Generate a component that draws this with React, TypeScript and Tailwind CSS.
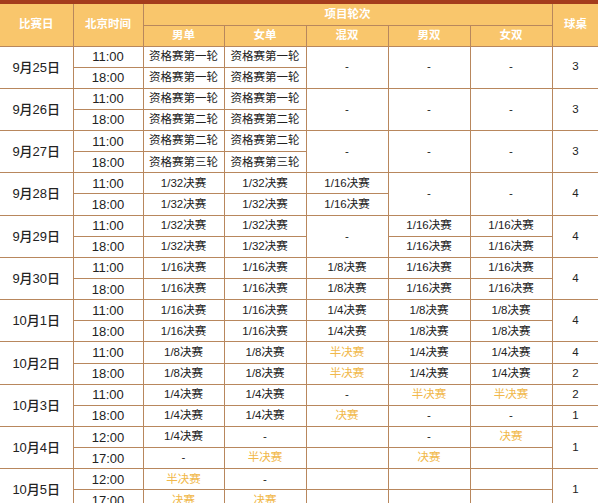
type Cell = { t: string; rs?: number; gold?: boolean; kind?: "date" | "time" };

const g = (t: string): Cell => ({ t, gold: true });
const c = (t: string, rs?: number): Cell => ({ t, rs });
const d = (t: string): Cell => ({ t, rs: 2, kind: "date" });
const tm = (t: string): Cell => ({ t, kind: "time" });

const Q1 = "资格赛第一轮";
const Q2 = "资格赛第二轮";
const Q3 = "资格赛第三轮";
const R32 = "1/32决赛";
const R16 = "1/16决赛";
const R8 = "1/8决赛";
const R4 = "1/4决赛";

const rows: Cell[][] = [
  [d("9月25日"), tm("11:00"), c(Q1), c(Q1), c("-", 2), c("-", 2), c("-", 2), c("3", 2)],
  [tm("18:00"), c(Q1), c(Q1)],
  [d("9月26日"), tm("11:00"), c(Q1), c(Q1), c("-", 2), c("-", 2), c("-", 2), c("3", 2)],
  [tm("18:00"), c(Q2), c(Q2)],
  [d("9月27日"), tm("11:00"), c(Q2), c(Q2), c("-", 2), c("-", 2), c("-", 2), c("3", 2)],
  [tm("18:00"), c(Q3), c(Q3)],
  [d("9月28日"), tm("11:00"), c(R32), c(R32), c(R16), c("-", 2), c("-", 2), c("4", 2)],
  [tm("18:00"), c(R32), c(R32), c(R16)],
  [d("9月29日"), tm("11:00"), c(R32), c(R32), c("-", 2), c(R16), c(R16), c("4", 2)],
  [tm("18:00"), c(R32), c(R32), c(R16), c(R16)],
  [d("9月30日"), tm("11:00"), c(R16), c(R16), c(R8), c(R16), c(R16), c("4", 2)],
  [tm("18:00"), c(R16), c(R16), c(R8), c(R16), c(R16)],
  [d("10月1日"), tm("11:00"), c(R16), c(R16), c(R4), c(R8), c(R8), c("4", 2)],
  [tm("18:00"), c(R16), c(R16), c(R4), c(R8), c(R8)],
  [d("10月2日"), tm("11:00"), c(R8), c(R8), g("半决赛"), c(R4), c(R4), c("4")],
  [tm("18:00"), c(R8), c(R8), g("半决赛"), c(R4), c(R4), c("2")],
  [d("10月3日"), tm("11:00"), c(R4), c(R4), c("-"), g("半决赛"), g("半决赛"), c("2")],
  [tm("18:00"), c(R4), c(R4), g("决赛"), c("-"), c("-"), c("1")],
  [d("10月4日"), tm("12:00"), c(R4), c("-"), c(""), c("-"), g("决赛"), c("1", 2)],
  [tm("17:00"), c("-"), g("半决赛"), c(""), g("决赛"), c("")],
  [d("10月5日"), tm("12:00"), g("半决赛"), c("-"), c(""), c(""), c(""), c("1", 2)],
  [tm("17:00"), g("决赛"), g("决赛"), c(""), c(""), c("")],
];

const line = "border border-[#b8875d]";

export default function App() {
  return (
    <div
      className="w-[598px] h-[503px] overflow-hidden bg-white"
      style={{ fontFamily: '"Liberation Sans", "Noto Sans CJK SC", sans-serif' }}
    >
      <div className="h-[4px] bg-[#a43c1d]" />
      <table className="w-[599px] table-fixed border-collapse text-center text-[#222]">
        <colgroup>
          <col className="w-[73px]" />
          <col className="w-[70px]" />
          <col className="w-[81px]" />
          <col className="w-[82px]" />
          <col className="w-[82px]" />
          <col className="w-[82px]" />
          <col className="w-[82px]" />
          <col className="w-[47px]" />
        </colgroup>
        <thead className="bg-[#f9c66c] text-[11.5px] font-bold text-white">
          <tr className="h-[21px]">
            <th rowSpan={2} className={`${line} border-t-0 border-l-0`}>比赛日</th>
            <th rowSpan={2} className={`${line} border-t-0`}>北京时间</th>
            <th colSpan={5} className={`${line} border-t-0`}>项目轮次</th>
            <th rowSpan={2} className={`${line} border-t-0`}>球桌</th>
          </tr>
          <tr className="h-[21px]">
            {["男单", "女单", "混双", "男双", "女双"].map((h) => (
              <th key={h} className={line}>{h}</th>
            ))}
          </tr>
        </thead>
        <tbody>
          {rows.map((r, i) => (
            <tr key={i} className="h-[21.15px]">
              {r.map((cell, j) => (
                <td
                  key={j}
                  rowSpan={cell.rs}
                  className={`${line} p-0 leading-none ${
                    cell.kind === "date"
                      ? "border-l-0 text-[13px] font-medium"
                      : cell.kind === "time"
                      ? "text-[13px]"
                      : "text-[11.5px]"
                  } ${cell.gold ? "text-[#f1b84a]" : ""}`}
                >
                  {cell.t}
                </td>
              ))}
            </tr>
          ))}
        </tbody>
      </table>
    </div>
  );
}
